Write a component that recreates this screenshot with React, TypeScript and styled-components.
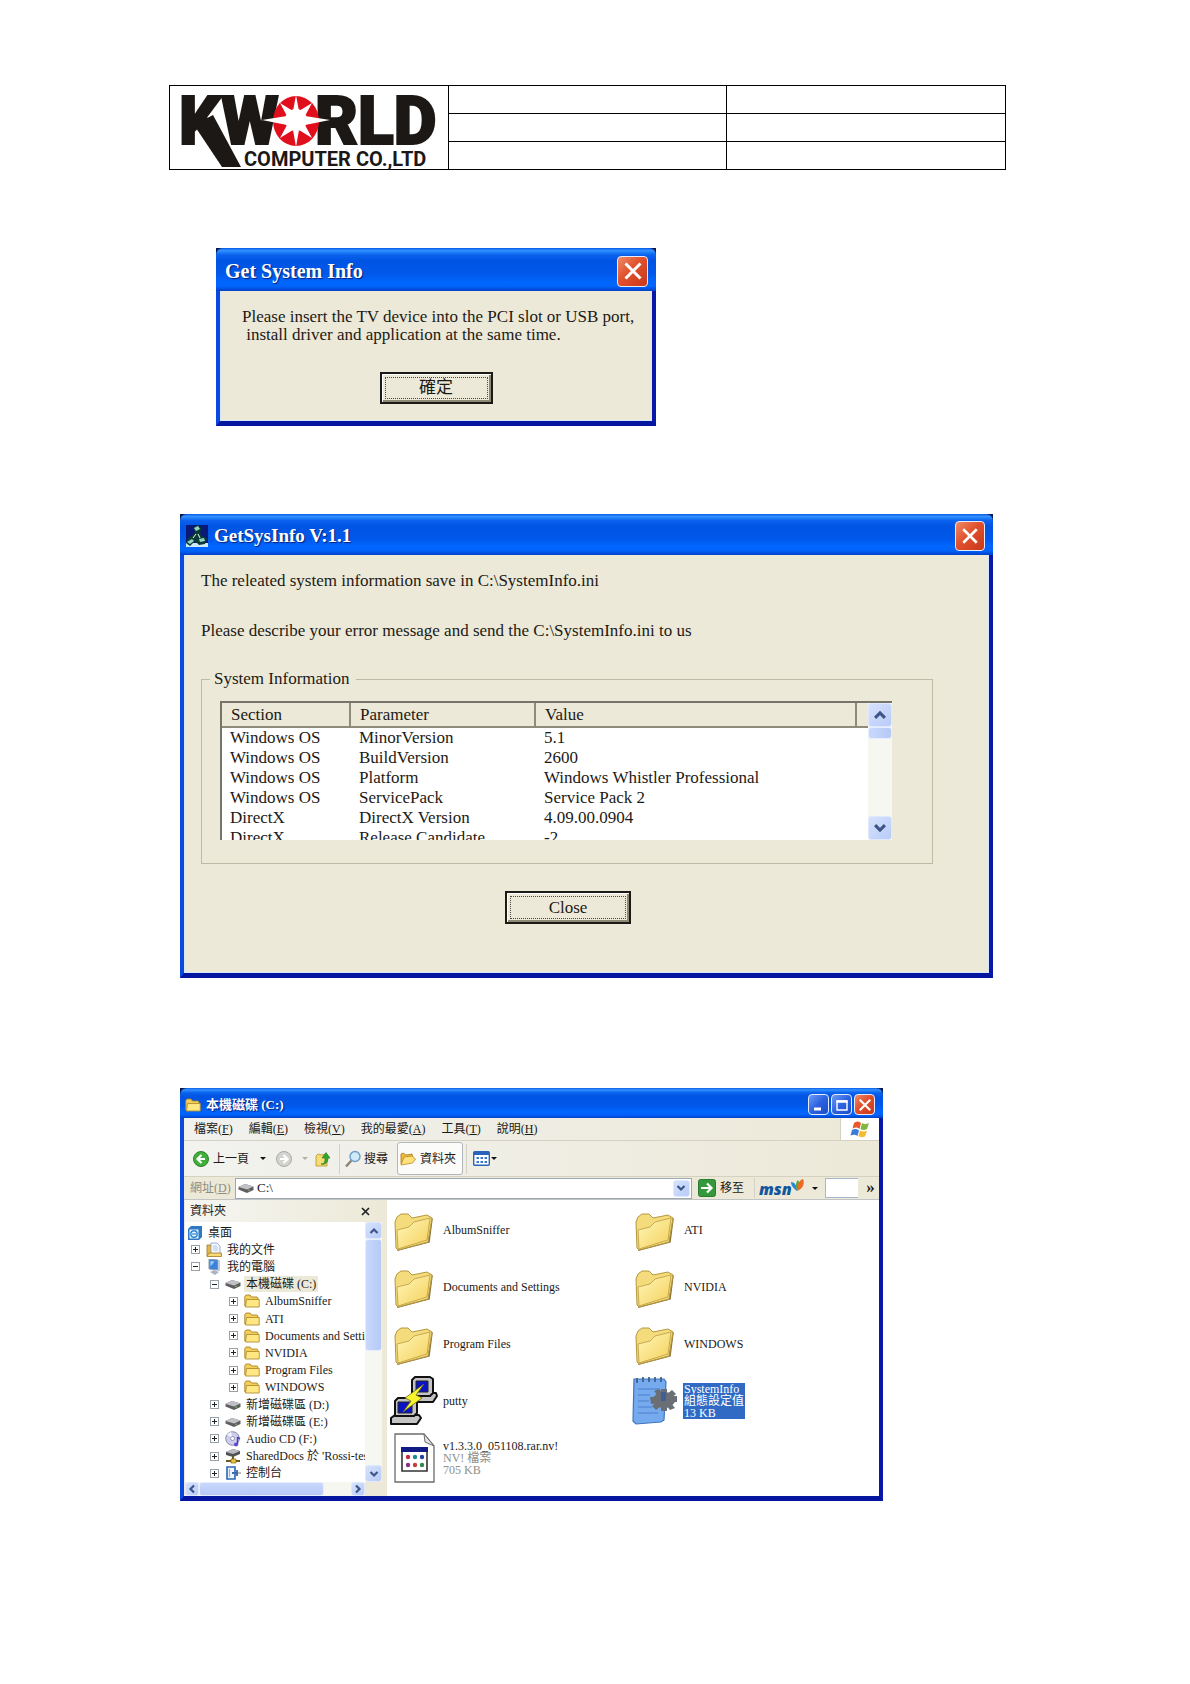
import React from 'react';
import styled, { createGlobalStyle, css } from 'styled-components';

const GlobalStyle = createGlobalStyle`
  *, *::before, *::after { box-sizing: border-box; }
  body {
    margin: 0;
    background: #ffffff;
    color: #1c1a16;
    font-family: "Liberation Serif", "Noto Sans CJK TC", serif;
  }
  button, input { font: inherit; color: inherit; padding: 0; margin: 0; }
  button { background: none; border: 0; }
  ul { list-style: none; margin: 0; padding: 0; }
  p { margin: 0; }
  svg { display: block; flex: none; }
`;

/* ---------- document page ---------- */

const Page = styled.main`
  min-height: 100vh;
  padding: 85px 184px 0 169px;
`;

const Letterhead = styled.table`
  width: 100%;
  table-layout: fixed;
  border-collapse: collapse;
  td { border: 1px solid #000; height: 28px; padding: 0; vertical-align: middle; }
`;

const LogoCell = styled.td`
  svg { overflow: visible; }
`;

const Figure = styled.section<{ $width: number; $indent: number; $gap: number }>`
  width: 100%;
  max-width: ${p => p.$width}px;
  margin: ${p => p.$gap}px 0 0 ${p => p.$indent}px;
`;

/* ---------- XP window chrome ---------- */

const Frame = styled.div`
  background: #0a1a50;
`;

const TitleBar = styled.header<{ $height: number }>`
  height: ${p => p.$height}px;
  display: flex;
  align-items: center;
  gap: 1px;
  padding: 3px 8px 0 5px;
  border-radius: 7px 7px 0 0;
  background: linear-gradient(180deg, #0a5be8 0%, #3191ff 6%, #0a62ee 16%, #0054e3 30%, #0058ea 60%, #0066ff 80%, #0062f8 90%, #0040c8 100%);
`;

const Title = styled.h2<{ $size: number }>`
  flex: 1;
  margin: 0;
  padding-left: 4px;
  color: #fff;
  font-size: ${p => p.$size}px;
  font-weight: 700;
  line-height: 24px;
  text-shadow: 1px 1px 1px #06207a;
  white-space: nowrap;
`;

const Body = styled.div<{ $height: number; $tint: string }>`
  min-height: ${p => p.$height}px;
  background: ${p => p.$tint};
  border: solid;
  border-width: 0 4px 5px 4px;
  border-color: #0a1fb0 #0818a8 #0416a0 #0a48e0;
  box-shadow: inset -1px -1px 0 #d8e6fa, inset 1px 0 0 #d8e6fa;
`;

const CaptionButton = styled.button<{ $size: number; $tone: 'red' | 'blue' }>`
  width: ${p => p.$size}px;
  height: ${p => p.$size}px;
  flex: none;
  display: grid;
  place-items: center;
  border: 1px solid #e8ecfa;
  border-radius: 4px;
  background: ${p =>
    p.$tone === 'red'
      ? 'linear-gradient(135deg, #f08a68 0%, #e0502c 45%, #c8381a 100%)'
      : 'linear-gradient(135deg, #6c9cf8 0%, #2c62e0 50%, #1a4cc8 100%)'};
`;

const CaptionGroup = styled.div`
  display: flex;
  gap: 2px;
`;

const CrossGlyph = ({ size }: { size: number }) => (
  <svg width={size} height={size} viewBox="0 0 16 16" aria-hidden="true">
    <path d="M2 2 14 14M14 2 2 14" stroke="#fff" strokeWidth="2.4" />
  </svg>
);

const ClassicButton = styled.button<{ $width: number; $height: number; $edge: number }>`
  width: ${p => p.$width}px;
  height: ${p => p.$height}px;
  display: block;
  padding: 3px;
  border: ${p => p.$edge}px solid #1c1a14;
  background: #ece9d8;
  box-shadow: inset 1px 1px 0 #fff, inset -2px -2px 0 #8c8974;
`;

const FocusRing = styled.span`
  display: flex;
  align-items: center;
  justify-content: center;
  height: 100%;
  border: 1px dotted #4c4a3c;
  font-size: 17px;
  line-height: 20px;
`;

/* ---------- dialog one ---------- */

const Message = styled.p`
  padding: 17px 0 0 22px;
  font-size: 17px;
  line-height: 18px;
  white-space: pre;
`;

const ButtonRow = styled.div<{ $top: number; $shift?: number }>`
  display: flex;
  justify-content: center;
  padding: ${p => p.$top}px ${p => p.$shift ?? 0}px 0 0;
`;

/* ---------- dialog two ---------- */

const DialogText = styled.p`
  padding: 16px 0 0 17px;
  font-size: 17px;
  line-height: 20px;
  & + & { padding-top: 30px; }
`;

const GroupBox = styled.fieldset`
  margin: 28px 56px 0 17px;
  height: 195px;
  padding: 12px 0 0 18px;
  border: 1px solid #bdbaa6;
  legend { padding: 0 6px 0 4px; margin-left: -10px; font-size: 17px; line-height: 20px; }
`;

const ListView = styled.div`
  width: 672px;
  max-width: 96%;
  height: 139px;
  display: flex;
  overflow: hidden;
  background: #fff;
  border-top: 2px solid #77746a;
  border-left: 2px solid #77746a;
`;

const Table = styled.table`
  flex: 1;
  table-layout: fixed;
  border-collapse: separate;
  border-spacing: 0;
  font-size: 17px;
  line-height: 20px;
  text-align: left;
  align-self: flex-start;
  th {
    height: 25px;
    padding: 0 0 0 9px;
    font-weight: 400;
    background: #ece9d8;
    border-right: 2px solid #8e8b7c;
    border-bottom: 2px solid #8e8b7c;
  }
  th:last-child { border-right: 0; }
  td { height: 20px; padding: 0 0 0 8px; white-space: nowrap; }
`;

const ScrollBar = styled.div<{ $axis: 'x' | 'y'; $size: number }>`
  flex: none;
  display: flex;
  flex-direction: ${p => (p.$axis === 'x' ? 'row' : 'column')};
  ${p => (p.$axis === 'x' ? css`height: ${p.$size}px;` : css`width: ${p.$size}px;`)}
  background: #f7f7f2;
`;

const Arrow = styled.button<{ $size: number }>`
  width: ${p => p.$size}px;
  height: ${p => p.$size}px;
  flex: none;
  display: grid;
  place-items: center;
  border: 1px solid #dfe8fd;
  border-radius: 3px;
  background: linear-gradient(135deg, #d6e2fd, #b8cbf8);
`;

const Thumb = styled.span<{ $length: number; $axis: 'x' | 'y' }>`
  flex: none;
  ${p => (p.$axis === 'x' ? css`width: ${p.$length}px;` : css`height: ${p.$length}px;`)}
  border: 1px solid #e6edfd;
  border-radius: 3px;
  background: linear-gradient(${p => (p.$axis === 'x' ? '180deg' : '90deg')}, #c9d8fc, #b6c9f6);
`;

const Track = styled.span`
  flex: 1;
`;

const Corner = styled.span`
  width: 17px;
  background: #ece9d8;
`;

const Chevron = ({ turn = 0, size = 10 }: { turn?: number; size?: number }) => (
  <svg width={size} height={size} viewBox="0 0 10 10" aria-hidden="true">
    <path d="M1.5 7 5 3.5 8.5 7" fill="none" stroke="#3c5488" strokeWidth="2.2" transform={`rotate(${turn} 5 5)`} />
  </svg>
);

/* ---------- explorer ---------- */

const MenuBar = styled.nav`
  height: 23px;
  display: flex;
  align-items: center;
  gap: 16px;
  padding-left: 10px;
  font-size: 12px;
  line-height: 16px;
  background: linear-gradient(90deg, #f1f1ee, #ece9d8);
  border-bottom: 1px solid #d4d1c0;
`;

const FlagBox = styled.span`
  width: 39px;
  height: 22px;
  margin-left: auto;
  display: grid;
  place-items: center;
  background: #fff;
  border-left: 1px solid #d4d1c0;
`;

const ToolBar = styled.div`
  height: 36px;
  display: flex;
  align-items: center;
  padding-left: 8px;
  font-size: 12px;
  line-height: 16px;
  background: linear-gradient(90deg, #f2f2ef, #ece9d8);
  border-bottom: 1px solid #d4d1c0;
`;

const Tool = styled.button<{ $gap?: number; $before?: number; $pressed?: boolean }>`
  display: flex;
  align-items: center;
  gap: ${p => p.$gap ?? 3}px;
  margin-left: ${p => p.$before ?? 0}px;
  white-space: nowrap;
  ${p =>
    p.$pressed &&
    css`
      height: 33px;
      padding: 0 6px 0 2px;
      background: #fbfbf9;
      border: 1px solid #b4b8bc;
      border-radius: 3px;
    `}
`;

const Divider = styled.span<{ $before: number; $after: number; $height: number }>`
  width: 1px;
  height: ${p => p.$height}px;
  margin: 0 ${p => p.$after}px 0 ${p => p.$before}px;
  background: #d4d2c6;
`;

const Caret = styled.span<{ $faint?: boolean; $before?: number }>`
  margin-left: ${p => p.$before ?? 0}px;
  border: solid transparent;
  border-width: 3px 3px 0 3px;
  border-top-color: ${p => (p.$faint ? '#b4b2a8' : '#111')};
`;

const AddressBar = styled.div`
  height: 23px;
  display: flex;
  align-items: center;
  padding-left: 6px;
  font-size: 12px;
  line-height: 16px;
  background: #ece9d8;
  border-bottom: 1px solid #c2c4c4;
`;

const AddressLabel = styled.label`
  width: 45px;
  color: #8f8c80;
`;

const Combo = styled.div`
  flex: 1;
  height: 21px;
  display: flex;
  align-items: center;
  gap: 3px;
  padding: 0 1px 0 2px;
  background: #fff;
  border: 1px solid #9aa8b8;
  input { flex: 1; min-width: 0; border: 0; outline: 0; background: none; font-size: 13px; }
`;

const SearchBox = styled.input`
  width: 33px;
  height: 20px;
  margin-left: 7px;
  border: 1px solid #a8b8cc;
  border-right: 0;
  background: #fff;
`;

const More = styled.button`
  width: 21px;
  height: 20px;
  padding-left: 4px;
  font-size: 17px;
  font-weight: 700;
  line-height: 12px;
`;

const Panes = styled.div`
  display: flex;
  height: 296px;
`;

const SidePane = styled.aside`
  width: 203px;
  flex: none;
  display: flex;
  flex-direction: column;
  padding: 0 5px 0 1px;
  background: #ece9d8;
`;

const PaneHead = styled.div`
  height: 22px;
  display: flex;
  align-items: center;
  justify-content: space-between;
  padding: 0 12px 0 5px;
  font-size: 12px;
  line-height: 16px;
  background: linear-gradient(90deg, #f6f6f2, #ece9d8);
`;

const TreeArea = styled.div`
  flex: 1;
  min-height: 0;
  display: flex;
  background: #fff;
`;

const Tree = styled.ul`
  flex: 1;
  min-width: 0;
  overflow: hidden;
  display: grid;
  grid-auto-rows: 1fr;
  && { padding-top: 2px; }
`;

const Node = styled.li<{ $level: number }>`
  display: flex;
  align-items: center;
  min-height: 0;
  padding-left: ${p => (p.$level === 0 ? 2 : 6 + 19 * (p.$level - 1))}px;
  font-size: 12px;
  line-height: 16px;
  white-space: nowrap;
  svg { margin-right: 3px; }
`;

const Toggle = styled.button`
  width: 9px;
  height: 9px;
  flex: none;
  margin-right: 6px;
  border: 1px solid #98a0a8;
  background: #fff;
  svg { width: 7px; height: 7px; }
`;

const NodeLabel = styled.span<{ $selected?: boolean }>`
  padding: 0 2px;
  background: ${p => (p.$selected ? '#ece9d8' : 'transparent')};
`;

const Files = styled.ul`
  flex: 1;
  display: grid;
  grid-template-columns: 241px 1fr;
  grid-auto-rows: 57px;
  align-content: start;
  background: #fff;
  && { padding: 1px 0 0 3px; }
`;

const FileItem = styled.li`
  display: flex;
  align-items: center;
  gap: 4px;
  font-size: 12px;
  line-height: 12px;
`;

const FileLabel = styled.div<{ $selected?: boolean }>`
  padding: 0 1px;
  color: ${p => (p.$selected ? '#fff' : 'inherit')};
  background: ${p => (p.$selected ? '#316ac5' : 'transparent')};
  small { display: block; font-size: 12px; color: ${p => (p.$selected ? '#fff' : '#8e8e8a')}; }
`;

/* ---------- drawings ---------- */

const KWorldLogo = () => (
  <svg width="274" height="82" viewBox="0 0 274 82" role="img" aria-label="KWORLD COMPUTER CO.,LTD">
    <g fill="#1b1815" stroke="#1b1815" strokeWidth="2" fontFamily="Roboto, sans-serif" fontWeight="900" fontSize="66">
      <text x="9" y="57">KW</text>
      <text x="145" y="57">RLD</text>
    </g>
    <path d="M24 38 43 28 71 80 52 80Z" fill="#1b1815" />
    <ellipse cx="126" cy="34" rx="23" ry="25" fill="#e10f1c" />
    <path
      fill="#fff"
      d="M126 8 129 24 142 16 135 29 160 33 135 38 142 51 129 43 126 60 123 43 110 51 117 38 92 33 117 29 110 16 123 24Z"
    />
    <circle cx="126" cy="33" r="11" fill="#fff" />
    <text x="74" y="79" fill="#1b1815" fontFamily="Roboto, sans-serif" fontWeight="700" fontSize="20">
      COMPUTER CO.,LTD
    </text>
  </svg>
);

const AppIcon = () => (
  <svg width="24" height="24" viewBox="0 0 24 24" aria-hidden="true">
    <rect x="1" y="1" width="22" height="18" fill="#0a1878" />
    <path d="M1 19h22v4H1z" fill="#cfeaf4" />
    <path d="m8 4 4-3 5 3-2 5 2 3 5 2-2 6-6 1-4-4-5 5-4-3 2-5 6-4 1-3Z" fill="#0c3a34" />
    <path d="m9 4 4-2 2 3-4 2ZM2 18l5-3 2 2-4 3ZM14 15l5-1 1 3-5 1Z" fill="#8fd8c0" />
    <path d="m11 10-3 4M13 10l2 4" stroke="#e8fbf4" strokeWidth="1" />
  </svg>
);

const SmallFolder = () => (
  <svg width="16" height="16" viewBox="0 0 16 16" aria-hidden="true">
    <path d="M.8 13V3.5L2 2h4l1.5 2H13l1 1v8Z" fill="#f3cf58" stroke="#a9852a" strokeWidth=".9" />
    <path d="M2.5 6.5h12.7V14H1.5Z" fill="#ffe884" stroke="#b28f30" strokeWidth=".9" />
  </svg>
);

const OpenFolder = () => (
  <svg width="16" height="16" viewBox="0 0 16 16" aria-hidden="true">
    <path d="M1 13V3l2-1 3 2 6-1 1 4Z" fill="#f2b93a" stroke="#a87a20" strokeWidth=".8" />
    <path d="m1 14 3-8 8-1 3.5 3-3 4Z" fill="#ffe27a" stroke="#b98a26" strokeWidth=".8" />
  </svg>
);

const Drive = () => (
  <svg width="16" height="16" viewBox="0 0 16 16" aria-hidden="true">
    <path d="M.5 7 7 4l8.5 2.5V10L9 13 .5 9.5Z" fill="#5e5e62" />
    <path d="M.5 7 7 4l8.5 2.5L9 9.5Z" fill="#c2c2c6" />
    <circle cx="11" cy="10.3" r=".8" fill="#7fd04c" />
  </svg>
);

const Desktop = () => (
  <svg width="16" height="16" viewBox="0 0 16 16" aria-hidden="true">
    <path d="M1 4 4 1h11v11l-3 3H1Z" fill="#2d78c4" />
    <path d="M2.5 4.5h9v9h-9Z" fill="#e8f4fc" />
    <circle cx="7" cy="9" r="3.2" fill="none" stroke="#2d86d0" strokeWidth="1.4" />
    <path d="M5 9h4.5" stroke="#2d86d0" strokeWidth="1.2" />
  </svg>
);

const Documents = () => (
  <svg width="16" height="16" viewBox="0 0 16 16" aria-hidden="true">
    <path d="M1 14V3h5v11Z" fill="#e8b648" stroke="#a27a24" strokeWidth=".8" />
    <path d="M5 1h6l3 3v9H5Z" fill="#f4f9ff" stroke="#7e9cc4" strokeWidth=".8" />
    <path d="M7 4h4M7 6h5M7 8h5" stroke="#9cb8dc" strokeWidth=".8" />
    <path d="M1 14.5 3 11h12.5v3.5Z" fill="#f8d878" stroke="#a27a24" strokeWidth=".8" />
  </svg>
);

const Computer = () => (
  <svg width="16" height="16" viewBox="0 0 16 16" aria-hidden="true">
    <path d="M3 0 12 1v10l-9-1Z" fill="#3a82dc" stroke="#8f9cb0" strokeWidth="1" />
    <path d="m4.5 2 4 .5-4 5Z" fill="#9cd0fa" />
    <path d="M12 1h2v11h-2Z" fill="#c4ccd8" />
    <path d="m4 13 4-2 5 2-4 3Z" fill="#aab4c4" />
  </svg>
);

const Disc = () => (
  <svg width="16" height="16" viewBox="0 0 16 16" aria-hidden="true">
    <circle cx="7.5" cy="7.5" r="6.8" fill="#cfcdec" stroke="#7f7fa8" strokeWidth=".9" />
    <path d="M7.5 7.5 2 3.5 6 .8Z" fill="#f4f4ff" />
    <circle cx="7.5" cy="7.5" r="2" fill="#fff" stroke="#8080b0" strokeWidth=".8" />
    <path d="M12.500 6v8M12.500 6l2.500 2" stroke="#4c3cc0" strokeWidth="1.4" />
    <circle cx="11" cy="13.6" r="2" fill="#5a48d0" />
  </svg>
);

const Shared = () => (
  <svg width="16" height="16" viewBox="0 0 16 16" aria-hidden="true">
    <path d="M1 4 8 1l7 2v3L8 9 1 7Z" fill="#505256" />
    <path d="m1 4 7-3 7 2-7 3Z" fill="#b9bbc0" />
    <path d="M8 8v4M1 13h14" stroke="#6a5c20" strokeWidth="2" />
    <path d="M6 11h5v4H6Z" fill="#eac43c" stroke="#806818" strokeWidth=".7" />
  </svg>
);

const ControlPanel = () => (
  <svg width="16" height="16" viewBox="0 0 16 16" aria-hidden="true">
    <path d="M2 2h8v12H2Z" fill="#eef5fd" stroke="#2a66b4" strokeWidth="1.6" />
    <path d="M4.500 4v8" stroke="#8cb4e4" strokeWidth="1.2" />
    <path d="M7 8h6M12 5v6" stroke="#3c6ca8" strokeWidth="1.8" />
    <path d="M13 8h3" stroke="#777" strokeWidth="1" />
  </svg>
);

const NavArrow = ({ back }: { back?: boolean }) => (
  <svg width="18" height="18" viewBox="0 0 18 18" aria-hidden="true">
    <circle cx="9" cy="9" r="7.500" fill={back ? '#3fae3a' : '#d3d3d0'} stroke={back ? '#2b8428' : '#aaa9a4'} />
    <path d={back ? 'M13 9H6M9.500 5 5.500 9l4 4' : 'M5 9h7M8.500 5l4 4-4 4'} fill="none" stroke="#fff" strokeWidth="2.2" />
  </svg>
);

const UpFolder = () => (
  <svg width="18" height="18" viewBox="0 0 18 18" aria-hidden="true">
    <path d="M2 16V6l2-2 4 1 5-1v12Z" fill="#f6dc74" stroke="#c29a34" strokeWidth=".9" />
    <path d="M7 14c4 0 4-3 4-6H8l4-5.500L16 8h-2c0 5-3 7-7 6Z" fill="#34a42c" stroke="#1f7c1c" strokeWidth=".6" />
  </svg>
);

const Magnifier = () => (
  <svg width="18" height="18" viewBox="0 0 18 18" aria-hidden="true">
    <path d="m7.500 10.500-5.500 6" stroke="#8a8478" strokeWidth="2.4" />
    <circle cx="11" cy="6.500" r="5" fill="#cfeafb" stroke="#6f9cc8" strokeWidth="1.4" />
  </svg>
);

const ViewsIcon = () => (
  <svg width="17" height="15" viewBox="0 0 17 15" aria-hidden="true">
    <rect x=".7" y=".7" width="15.600" height="13.600" rx="1" fill="#fff" stroke="#2c62b8" strokeWidth="1.4" />
    <path d="M1 2.500h15" stroke="#2c62b8" strokeWidth="3" />
    <path d="M3.500 7h2.500M7.500 7H10M11.500 7H14M3.500 11H6M7.500 11H10M11.500 11H14" stroke="#3b74c8" strokeWidth="2.2" />
  </svg>
);

const GoIcon = () => (
  <svg width="18" height="18" viewBox="0 0 18 18" aria-hidden="true">
    <rect x=".5" y=".5" width="17" height="17" rx="2" fill="#36983c" stroke="#2a7c30" />
    <path d="M3 9h10M9 4.500 13.500 9 9 13.500" fill="none" stroke="#fff" strokeWidth="2.2" />
  </svg>
);

const MsnLogo = () => (
  <svg width="46" height="20" viewBox="0 0 46 20" overflow="visible" role="img" aria-label="msn">
    <text x="1" y="17" fill="#14569e" fontFamily="'Open Sans', sans-serif" fontWeight="800" fontStyle="italic" fontSize="16">msn</text>
    <path d="M39 13c-3-2-6-5-6-9 4 0 6 4 6 9Z" fill="#2f86d8" />
    <path d="M39 12c-2-4-1-8 1-10 2 3 2 6-1 10Z" fill="#54a83c" />
    <path d="M39 13c0-6 2-11 6-12 2 4 0 10-6 12Z" fill="#ec6a24" />
  </svg>
);

const WindowsFlag = () => (
  <svg width="20" height="19" viewBox="0 0 20 19" aria-hidden="true">
    <path d="M4 3c3-2 5-2 7 0L9.500 9c-2-2-4-2-7-.5Z" fill="#e8582c" />
    <path d="M12 3c2 1.500 4 1.500 7 0l-2 6c-2.500 1.500-5 1-6.500 0Z" fill="#7fb840" />
    <path d="M2 10c3-1.500 5-1 7 .5L7.500 16c-2-1.500-4-1.500-7-.5Z" fill="#3c7cd8" />
    <path d="M10 10.500c2 1 4 1.500 7 0l-2 6c-2.500 1-5 1-6.500-.5Z" fill="#f4bc2c" />
  </svg>
);

const BigFolder = () => (
  <svg width="48" height="48" viewBox="0 0 48 48" aria-hidden="true">
    <defs>
      <linearGradient id="manila" x1="0" y1="0" x2="1" y2="1">
        <stop offset="0" stopColor="#fff8bc" />
        <stop offset="1" stopColor="#f4cf58" />
      </linearGradient>
    </defs>
    <path d="M8 44 39 36 42 13l-2-1-3 22-29 8Z" fill="#8a7438" stroke="#8a7438" strokeWidth="1.5" />
    <path d="M5 16 7 11l4-3h7l4 4 15-3 5 3-4 24L8 44 6 42Z" fill="#f4dc7c" stroke="#b5973e" strokeWidth="1" />
    <path d="m7 24 12-3 5-5 16-4-3 22-29 9Z" fill="url(#manila)" stroke="#c2a348" strokeWidth=".9" />
  </svg>
);

const PuttyIcon = () => (
  <svg width="48" height="50" viewBox="0 0 48 50" aria-hidden="true">
    <g stroke="#111" strokeWidth="2" fill="#c4c4c4" strokeLinejoin="round">
      <path d="m26 20 2-3h18l1 3-4 6H24Z" />
      <path d="m22 4 3-3h15l3 2v14l-3 3H22Z" />
      <path d="m1 42 4-3h24l2 3-4 6H1Z" />
      <path d="m5 25 3-3h16l3 2v13l-3 3H5Z" />
    </g>
    <path d="M26 5h12v11H26ZM8 26h14v11H8Z" fill="#0a14c4" stroke="#222" />
    <path d="m34 8-19 14 6 3-8 11 19-14-6-3Z" fill="#f8f42c" stroke="#6c6a10" strokeWidth=".8" />
  </svg>
);

const ProgramFile = () => (
  <svg width="48" height="50" viewBox="0 0 48 50" aria-hidden="true">
    <path d="M5 1h29l10 12v36H5Z" fill="#fff" stroke="#6c6c6c" strokeWidth="1.3" />
    <path d="m34 1 1 8 9 4Z" fill="#e4e4e4" stroke="#6c6c6c" />
    <path d="M12 15h25v23H12Z" fill="#fff" stroke="#333" strokeWidth="1.6" />
    <path d="M11 14h27v5H11Z" fill="#101c84" />
    <circle cx="18" cy="24" r="2.2" fill="#c02c3c" />
    <circle cx="25" cy="24" r="2.2" fill="#1c8c8c" />
    <circle cx="32" cy="24" r="2.2" fill="#2440a8" />
    <circle cx="18" cy="32" r="2.2" fill="#8c2c84" />
    <circle cx="25" cy="32" r="2.2" fill="#c83c3c" />
    <circle cx="32" cy="32" r="2.2" fill="#2c8c4c" />
  </svg>
);

const SettingsFile = () => (
  <svg width="48" height="50" viewBox="0 0 48 50" aria-hidden="true">
    <path d="M3 3h30l2 3-2 38-3 2-25 2-3-3Z" fill="#76aaee" stroke="#3f74c0" strokeWidth="1.2" />
    <path d="M6 2v5M12 1v5M18 1v5M24 1v5M30 1v5" stroke="#40608c" strokeWidth="1.8" />
    <path d="M7 13h22M7 19h12M7 25h11M7 31h14M7 37h20" stroke="#4a80cc" strokeWidth="1.2" />
    <g transform="translate(33 24)" fill="#696f74">
      <ellipse rx="11" ry="8" />
      <path d="M-3-11h6v22h-6ZM-14-3 13-4v6l-26 2ZM-10-9l5-2L11 8 6 10ZM8-10l4 4L-8 10l-4-4Z" />
      <path d="M-3-8h5v9h-5Z" fill="#3f5f96" />
    </g>
  </svg>
);

/* ---------- content ---------- */

const rows = [
  ['Windows OS', 'MinorVersion', '5.1'],
  ['Windows OS', 'BuildVersion', '2600'],
  ['Windows OS', 'Platform', 'Windows Whistler Professional'],
  ['Windows OS', 'ServicePack', 'Service Pack 2'],
  ['DirectX', 'DirectX Version', '4.09.00.0904'],
  ['DirectX', 'Release Candidate', '-2'],
];

const menus = [
  ['檔案', 'F'],
  ['編輯', 'E'],
  ['檢視', 'V'],
  ['我的最愛', 'A'],
  ['工具', 'T'],
  ['說明', 'H'],
];

type TreeNode = { level: number; open?: boolean; icon: React.ReactNode; label: string; selected?: boolean };

const tree: TreeNode[] = [
  { level: 0, icon: <Desktop />, label: '桌面' },
  { level: 1, icon: <Documents />, label: '我的文件' },
  { level: 1, open: true, icon: <Computer />, label: '我的電腦' },
  { level: 2, open: true, icon: <Drive />, label: '本機磁碟 (C:)', selected: true },
  { level: 3, icon: <SmallFolder />, label: 'AlbumSniffer' },
  { level: 3, icon: <SmallFolder />, label: 'ATI' },
  { level: 3, icon: <SmallFolder />, label: 'Documents and Settings' },
  { level: 3, icon: <SmallFolder />, label: 'NVIDIA' },
  { level: 3, icon: <SmallFolder />, label: 'Program Files' },
  { level: 3, icon: <SmallFolder />, label: 'WINDOWS' },
  { level: 2, icon: <Drive />, label: '新增磁碟區 (D:)' },
  { level: 2, icon: <Drive />, label: '新增磁碟區 (E:)' },
  { level: 2, icon: <Disc />, label: 'Audio CD (F:)' },
  { level: 2, icon: <Shared />, label: "SharedDocs 於 'Rossi-tes" },
  { level: 2, icon: <ControlPanel />, label: '控制台' },
];

type FileEntry = { name: string; icon: React.ReactNode; details?: string[]; selected?: boolean };

const files: FileEntry[] = [
  { name: 'AlbumSniffer', icon: <BigFolder /> },
  { name: 'ATI', icon: <BigFolder /> },
  { name: 'Documents and Settings', icon: <BigFolder /> },
  { name: 'NVIDIA', icon: <BigFolder /> },
  { name: 'Program Files', icon: <BigFolder /> },
  { name: 'WINDOWS', icon: <BigFolder /> },
  { name: 'putty', icon: <PuttyIcon /> },
  { name: 'SystemInfo', icon: <SettingsFile />, details: ['組態設定值', '13 KB'], selected: true },
  { name: 'v1.3.3.0_051108.rar.nv!', icon: <ProgramFile />, details: ['NV! 檔案', '705 KB'] },
];

const InsertDeviceDialog = () => (
  <Figure $width={440} $indent={47} $gap={78}>
    <Frame>
      <TitleBar $height={43}>
        <Title $size={20}>Get System Info</Title>
        <CaptionButton $size={31} $tone="red" aria-label="Close">
          <CrossGlyph size={20} />
        </CaptionButton>
      </TitleBar>
      <Body $height={135} $tint="#ece9d8">
        <Message>{'Please insert the TV device into the PCI slot or USB port,\n install driver and application at the same time.'}</Message>
        <ButtonRow $top={28}>
          <ClassicButton $width={113} $height={32} $edge={2}>
            <FocusRing>確定</FocusRing>
          </ClassicButton>
        </ButtonRow>
      </Body>
    </Frame>
  </Figure>
);

const SystemInfoDialog = () => (
  <Figure $width={813} $indent={11} $gap={88}>
    <Frame>
      <TitleBar $height={41}>
        <AppIcon />
        <Title $size={19}>GetSysInfo V:1.1</Title>
        <CaptionButton $size={30} $tone="red" aria-label="Close">
          <CrossGlyph size={18} />
        </CaptionButton>
      </TitleBar>
      <Body $height={423} $tint="#ece9d8">
        <DialogText>The releated system information save in C:\SystemInfo.ini</DialogText>
        <DialogText>Please describe your error message and send the C:\SystemInfo.ini to us</DialogText>
        <GroupBox>
          <legend>System Information</legend>
          <ListView>
            <Table>
              <colgroup>
                <col style={{ width: 129 }} />
                <col style={{ width: 185 }} />
                <col style={{ width: 321 }} />
                <col />
              </colgroup>
              <thead>
                <tr>
                  <th>Section</th>
                  <th>Parameter</th>
                  <th>Value</th>
                  <th aria-label="Filler" />
                </tr>
              </thead>
              <tbody>
                {rows.map((row, i) => (
                  <tr key={i}>
                    <td>{row[0]}</td>
                    <td>{row[1]}</td>
                    <td>{row[2]}</td>
                    <td />
                  </tr>
                ))}
              </tbody>
            </Table>
            <ScrollBar $axis="y" $size={24}>
              <Arrow $size={24} aria-label="Scroll up"><Chevron size={14} /></Arrow>
              <Thumb $axis="y" $length={12} />
              <Track />
              <Arrow $size={24} aria-label="Scroll down"><Chevron size={14} turn={180} /></Arrow>
            </ScrollBar>
          </ListView>
        </GroupBox>
        <ButtonRow $top={27} $shift={37}>
          <ClassicButton $width={126} $height={33} $edge={2}>
            <FocusRing>Close</FocusRing>
          </ClassicButton>
        </ButtonRow>
      </Body>
    </Frame>
  </Figure>
);

const ExplorerWindow = () => (
  <Figure $width={703} $indent={11} $gap={110}>
    <Frame>
      <TitleBar $height={30}>
        <SmallFolder />
        <Title $size={13}>本機磁碟 (C:)</Title>
        <CaptionGroup>
          <CaptionButton $size={21} $tone="blue" aria-label="Minimize">
            <svg width="14" height="14" viewBox="0 0 14 14"><path d="M2 11h7" stroke="#fff" strokeWidth="3" /></svg>
          </CaptionButton>
          <CaptionButton $size={21} $tone="blue" aria-label="Maximize">
            <svg width="14" height="14" viewBox="0 0 14 14"><path d="M2 3h10v9H2Z" fill="none" stroke="#fff" strokeWidth="1.4" /><path d="M1.500 3.500h11" stroke="#fff" strokeWidth="2.6" /></svg>
          </CaptionButton>
          <CaptionButton $size={21} $tone="red" aria-label="Close">
            <CrossGlyph size={14} />
          </CaptionButton>
        </CaptionGroup>
      </TitleBar>
      <Body $height={383} $tint="#ffffff">
        <MenuBar>
          {menus.map(([name, key]) => (
            <button key={key}>{name}(<u>{key}</u>)</button>
          ))}
          <FlagBox><WindowsFlag /></FlagBox>
        </MenuBar>
        <ToolBar>
          <Tool><NavArrow back />上一頁<Caret $before={8} /></Tool>
          <Tool $before={9} aria-label="Forward"><NavArrow /><Caret $faint $before={6} /></Tool>
          <Tool $before={6} aria-label="Up"><UpFolder /></Tool>
          <Divider $before={7} $after={4} $height={30} />
          <Tool $gap={2}><Magnifier />搜尋</Tool>
          <Tool $pressed $gap={4} $before={9}><OpenFolder />資料夾</Tool>
          <Divider $before={3} $after={6} $height={30} />
          <Tool $gap={1} aria-label="Views"><ViewsIcon /><Caret /></Tool>
        </ToolBar>
        <AddressBar>
          <AddressLabel htmlFor="address">網址(<u>D</u>)</AddressLabel>
          <Combo>
            <Drive />
            <input id="address" defaultValue="C:\" />
            <Arrow $size={17} aria-label="Address list"><Chevron turn={180} /></Arrow>
          </Combo>
          <Tool $gap={4} $before={6}><GoIcon />移至</Tool>
          <Divider $before={10} $after={3} $height={20} />
          <Tool $gap={8} aria-label="msn"><MsnLogo /><Caret /></Tool>
          <SearchBox aria-label="msn search" />
          <More aria-label="More">»</More>
        </AddressBar>
        <Panes>
          <SidePane>
            <PaneHead>
              資料夾
              <button aria-label="Close folders">
                <svg width="9" height="9" viewBox="0 0 9 9"><path d="m1 1 7 7M8 1 1 8" stroke="#222" strokeWidth="1.7" /></svg>
              </button>
            </PaneHead>
            <TreeArea>
              <Tree role="tree">
                {tree.map(node => (
                  <Node key={node.label} role="treeitem" $level={node.level}>
                    {node.level > 0 && (
                      <Toggle aria-label={node.open ? 'Collapse' : 'Expand'}>
                        <svg viewBox="0 0 7 7"><path d={node.open ? 'M1 3.500h5' : 'M1 3.500h5M3.500 1v5'} stroke="#222" /></svg>
                      </Toggle>
                    )}
                    {node.icon}
                    <NodeLabel $selected={node.selected}>{node.label}</NodeLabel>
                  </Node>
                ))}
              </Tree>
              <ScrollBar $axis="y" $size={17}>
                <Arrow $size={17} aria-label="Scroll up"><Chevron /></Arrow>
                <Thumb $axis="y" $length={112} />
                <Track />
                <Arrow $size={17} aria-label="Scroll down"><Chevron turn={180} /></Arrow>
              </ScrollBar>
            </TreeArea>
            <ScrollBar $axis="x" $size={14}>
              <Arrow $size={14} aria-label="Scroll left"><Chevron turn={270} /></Arrow>
              <Thumb $axis="x" $length={125} />
              <Track />
              <Arrow $size={14} aria-label="Scroll right"><Chevron turn={90} /></Arrow>
              <Corner />
            </ScrollBar>
          </SidePane>
          <Files>
            {files.map(file => (
              <FileItem key={file.name}>
                {file.icon}
                <FileLabel $selected={file.selected}>
                  {file.name}
                  {file.details?.map(line => <small key={line}>{line}</small>)}
                </FileLabel>
              </FileItem>
            ))}
          </Files>
        </Panes>
      </Body>
    </Frame>
  </Figure>
);

export default function App() {
  return (
    <>
      <GlobalStyle />
      <Page>
        <Letterhead>
          <tbody>
            <tr>
              <LogoCell rowSpan={3}><KWorldLogo /></LogoCell>
              <td />
              <td />
            </tr>
            <tr><td /><td /></tr>
            <tr><td /><td /></tr>
          </tbody>
        </Letterhead>
        <InsertDeviceDialog />
        <SystemInfoDialog />
        <ExplorerWindow />
      </Page>
    </>
  );
}
